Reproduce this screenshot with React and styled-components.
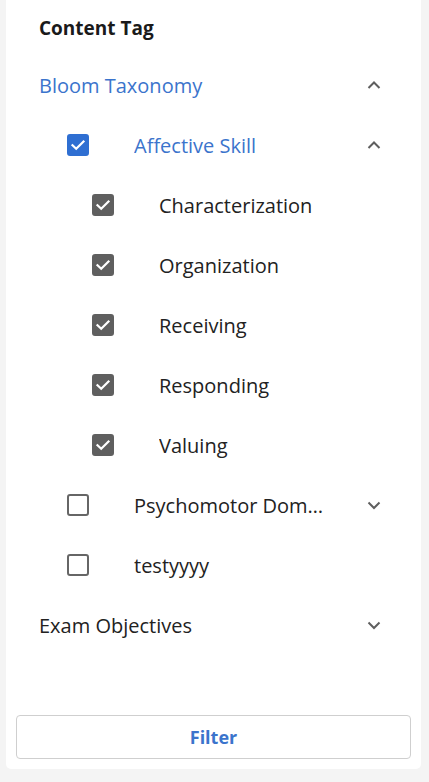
import React from 'react';
import styled, { createGlobalStyle } from 'styled-components';

const GlobalStyle = createGlobalStyle`
  html, body {
    margin: 0;
    padding: 0;
    background: #f4f4f4;
    font-family: "Open Sans", "Noto Sans", sans-serif;
  }
`;

const Page = styled.div`
  width: 429px;
  height: 782px;
  box-sizing: border-box;
  padding: 0 8px 13px 6px;
`;

const Card = styled.section`
  background: #fff;
  height: 100%;
  border-radius: 0 0 5px 5px;
  display: flex;
  flex-direction: column;
  padding: 16px 10px 10px 10px;
  box-sizing: border-box;
`;

const Title = styled.h2`
  margin: 0 0 15px 0;
  padding-left: 23px;
  font-size: 19px;
  line-height: 24px;
  font-weight: 700;
  color: #1a1a1a;
`;

const List = styled.div`
  flex: 1;
  display: flex;
  flex-direction: column;
`;

const indents = [23, 51, 76];

const Row = styled.div`
  height: 60px;
  display: flex;
  align-items: center;
  padding-left: ${(p) => indents[p.level]}px;
  padding-right: 25px;
`;

const Label = styled.span`
  flex: 1;
  min-width: 0;
  font-size: 20px;
  color: ${(p) => (p.active ? '#3b74cc' : '#222')};
  white-space: nowrap;
  overflow: hidden;
  text-overflow: ellipsis;
  margin-left: ${(p) => (p.withBox ? '45px' : '0')};
`;

const Box = styled.span`
  width: 22px;
  height: 22px;
  flex: none;
  box-sizing: border-box;
  border-radius: 3px;
  display: flex;
  align-items: center;
  justify-content: center;
  background: ${(p) => (p.checked ? p.tone : '#fff')};
  border: 2px solid ${(p) => (p.checked ? p.tone : '#666')};
`;

const Chevron = styled.svg`
  width: 24px;
  height: 24px;
  flex: none;
  margin-left: 36px;
`;

const FilterButton = styled.button`
  height: 44px;
  width: 100%;
  background: #fff;
  border: 1px solid #cfcfcf;
  border-radius: 4px;
  font-family: inherit;
  font-size: 18px;
  font-weight: 700;
  color: #3b74cc;
  cursor: pointer;
`;

const Check = () => (
  <svg width="16" height="16" viewBox="0 0 16 16">
    <path d="M2.5 8.3 L6.2 11.8 L13.5 4.5" fill="none" stroke="#fff" strokeWidth="2.2" strokeLinecap="square" />
  </svg>
);

const Arrow = ({ up }) => (
  <Chevron viewBox="0 0 24 24">
    <path
      d={up ? 'M6.5 15 L12 9.5 L17.5 15' : 'M6.5 9.5 L12 15 L17.5 9.5'}
      fill="none"
      stroke="#5f5f5f"
      strokeWidth="2"
    />
  </Chevron>
);

const items = [
  { label: 'Bloom Taxonomy', level: 0, active: true, chevron: 'up' },
  { label: 'Affective Skill', level: 1, box: 'blue', active: true, chevron: 'up' },
  { label: 'Characterization', level: 2, box: 'gray' },
  { label: 'Organization', level: 2, box: 'gray' },
  { label: 'Receiving', level: 2, box: 'gray' },
  { label: 'Responding', level: 2, box: 'gray' },
  { label: 'Valuing', level: 2, box: 'gray' },
  { label: 'Psychomotor Domain', level: 1, box: 'empty', chevron: 'down' },
  { label: 'testyyyy', level: 1, box: 'empty' },
  { label: 'Exam Objectives', level: 0, chevron: 'down' },
];

const tones = { blue: '#2f6fd2', gray: '#5f5f5f' };

const App = () => (
  <Page>
    <GlobalStyle />
    <Card>
      <Title>Content Tag</Title>
      <List>
        {items.map((item) => (
          <Row key={item.label} level={item.level}>
            {item.box && (
              <Box checked={item.box !== 'empty'} tone={tones[item.box]}>
                {item.box !== 'empty' && <Check />}
              </Box>
            )}
            <Label active={item.active} withBox={!!item.box}>{item.label}</Label>
            {item.chevron && <Arrow up={item.chevron === 'up'} />}
          </Row>
        ))}
      </List>
      <FilterButton>Filter</FilterButton>
    </Card>
  </Page>
);

export default App;
